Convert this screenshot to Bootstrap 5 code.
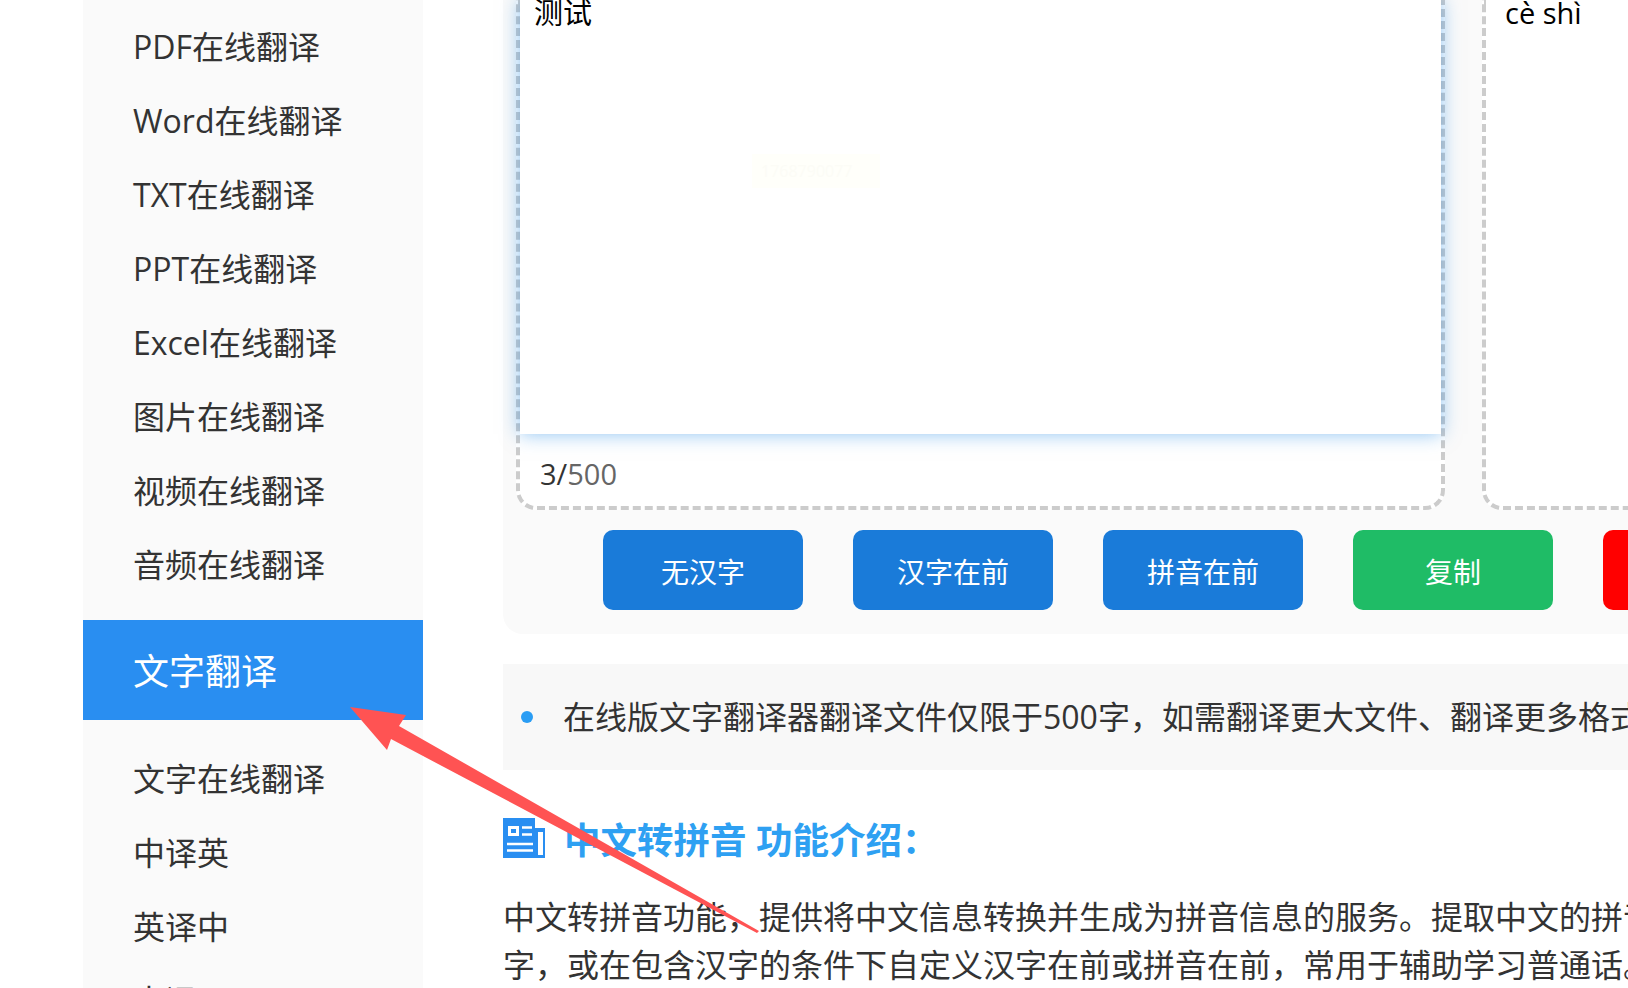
<!DOCTYPE html>
<html lang="zh-CN">
<head>
<meta charset="utf-8">
<title>中文转拼音</title>
<link href="https://cdn.jsdelivr.net/npm/bootstrap@5.3.0/dist/css/bootstrap.min.css" rel="stylesheet">
<style>
html,body{margin:0;height:100%;overflow:hidden;background:#fff}
body{font-family:"Open Sans","Noto Sans CJK SC",sans-serif;color:#333}
.stage{width:1628px;height:988px;overflow:hidden}
.side{width:340px;margin-left:83px;background:#fafafa;padding-top:10px;flex:none}
.side-link{display:block;height:74px;line-height:74px;padding-left:50px;font-size:32px;color:#333;text-decoration:none;white-space:nowrap}
.side-active{height:100px;line-height:104px;font-size:36px;color:#fff;background:#298ef1;margin:18px 0 22px}
.content{width:1921px;margin-left:80px;flex:none}
.panel{background:#fafafa;border-radius:0 0 20px 20px;height:634px;padding:0 13px}
.boxes{gap:37px;height:510px}
.dashbox{width:929px;height:510px;border:4px dashed #ccc;border-top:0;border-radius:0 0 20px 20px;background:#fff}
.inputzone{height:434px;background:#fff;padding-left:14px;font-size:29px;line-height:26px;color:#000;position:relative}
.pinyin{padding-left:19px}
.glow{box-shadow:0 0 18px rgba(30,136,229,.5)}
.wmark{position:absolute;left:232px;top:154px;width:128px;height:34px;background:#fffffa;color:#fcfcf6;font-size:16px;line-height:34px;padding-left:9px}
.counter{font-size:29px;line-height:40px;padding:20px 0 0 20px;color:#333}
.counter span{color:#666}
.btnrow{gap:50px;padding-left:87px;margin-top:20px}
.act{width:200px;height:80px;border:0;border-radius:10px;font-size:28px;line-height:84px;padding:0;color:#fff}
.act-blue{background:#1a7bd9}
.act-green{background:#1fbc66}
.act-red{background:#f00}
.tip{height:106px;margin-top:30px;background:#f8f8f8;padding-left:18px;font-size:32px;white-space:nowrap}
.tipdot{width:12px;height:12px;border-radius:50%;background:#2a9df4;margin-right:30px;flex:none}
.headline{margin-top:48px;height:40px;gap:19px}
.headline h2{margin:4px 0 0;font-size:36.5px;line-height:40px;font-weight:700;color:#2ea0f2;white-space:nowrap;font-family:inherit}
.desc{margin:35px 0 0;font-size:32px;line-height:48px;white-space:nowrap;color:#333}
.arrowlay{position:absolute;left:0;top:0;pointer-events:none}
</style>
</head>
<body>
<div class="stage d-flex position-relative">
  <nav class="side">
    <a class="side-link" href="#">PDF在线翻译</a>
    <a class="side-link" href="#">Word在线翻译</a>
    <a class="side-link" href="#">TXT在线翻译</a>
    <a class="side-link" href="#">PPT在线翻译</a>
    <a class="side-link" href="#">Excel在线翻译</a>
    <a class="side-link" href="#">图片在线翻译</a>
    <a class="side-link" href="#">视频在线翻译</a>
    <a class="side-link" href="#">音频在线翻译</a>
    <a class="side-link side-active" href="#">文字翻译</a>
    <a class="side-link" href="#">文字在线翻译</a>
    <a class="side-link" href="#">中译英</a>
    <a class="side-link" href="#">英译中</a>
    <a class="side-link" href="#">中译日</a>
  </nav>
  <main class="content">
    <section class="panel">
      <div class="boxes d-flex">
        <div class="dashbox">
          <div class="inputzone glow">测试<div class="wmark">1768790077</div></div>
          <div class="counter">3/<span>500</span></div>
        </div>
        <div class="dashbox">
          <div class="inputzone pinyin">cè shì</div>
        </div>
      </div>
      <div class="btnrow d-flex">
        <button class="btn act act-blue" type="button">无汉字</button>
        <button class="btn act act-blue" type="button">汉字在前</button>
        <button class="btn act act-blue" type="button">拼音在前</button>
        <button class="btn act act-green" type="button">复制</button>
        <button class="btn act act-red" type="button">清空</button>
      </div>
    </section>
    <div class="tip d-flex align-items-center">
      <span class="tipdot"></span>
      <span>在线版文字翻译器翻译文件仅限于500字，如需翻译更大文件、翻译更多格式的文件，请下载客户端。</span>
    </div>
    <div class="headline d-flex align-items-center">
      <svg width="42" height="40" viewBox="0 0 42 40" aria-hidden="true">
        <path d="M0 0h32v10h10v30H0z" fill="#298ef1"/>
        <rect x="35" y="14" width="5" height="23" fill="#fff"/>
        <rect x="6.500" y="9.500" width="8" height="7" fill="none" stroke="#fff" stroke-width="3"/>
        <path d="M19 9.500h10M19 16.500h10M4 26h26M4 32.500h26" stroke="#fff" stroke-width="2.500" fill="none"/>
      </svg>
      <h2>中文转拼音 功能介绍：</h2>
    </div>
    <p class="desc">中文转拼音功能，提供将中文信息转换并生成为拼音信息的服务。提取中文的拼音信息时，可选择是否包含汉<br>字，或在包含汉字的条件下自定义汉字在前或拼音在前，常用于辅助学习普通话。</p>
  </main>
  <svg class="arrowlay" width="1628" height="988" viewBox="0 0 1628 988" aria-hidden="true">
    <polygon points="350,707 406,715 399,726 759,931 757,933 391,739 387,750" fill="#ff5353"/>
  </svg>
</div>
<script src="https://cdn.jsdelivr.net/npm/bootstrap@5.3.0/dist/js/bootstrap.bundle.min.js"></script>
</body>
</html>
